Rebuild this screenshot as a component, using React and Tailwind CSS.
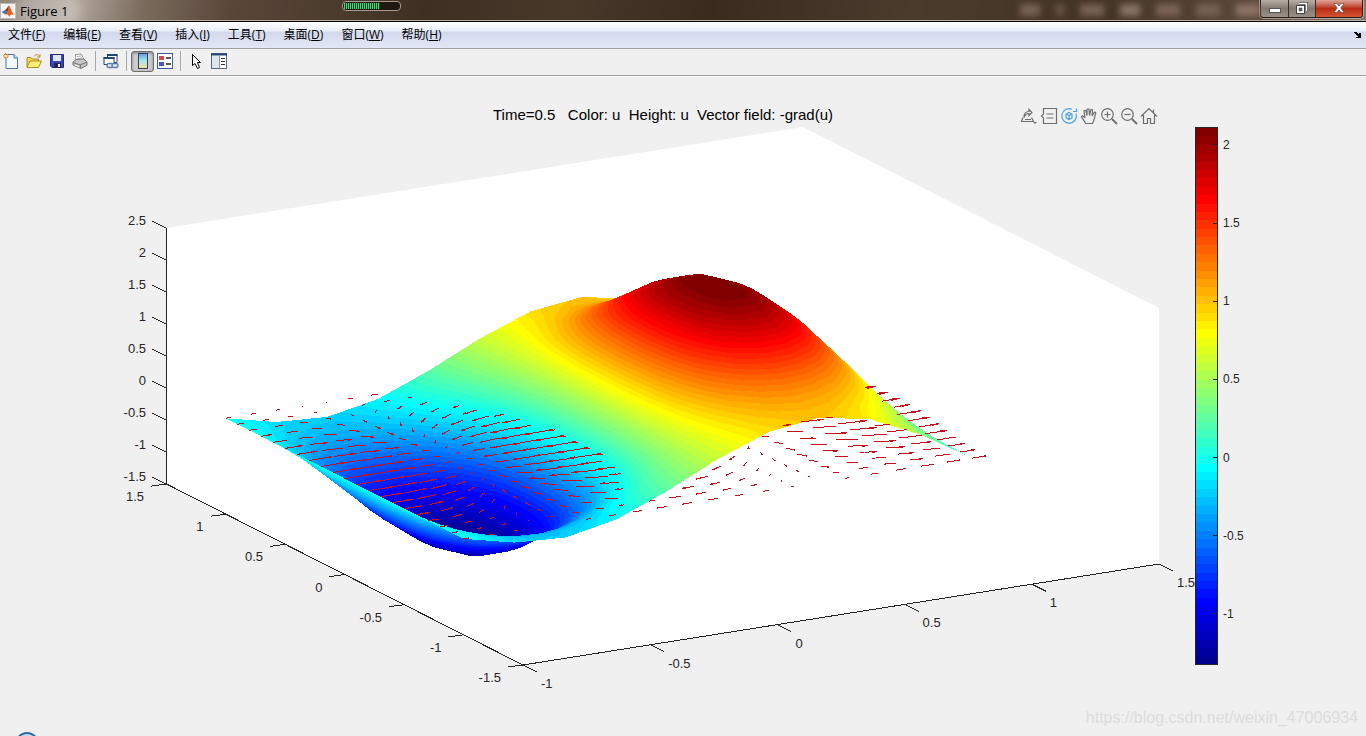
import { useMemo } from "react";
import clsx from "clsx";

const U_MIN = -1.32;
const U_MAX = 2.115;
const COLORS = 64;
const CELLS = 20;
const SUB = 2;
const ARROW_SCALE = 0.0217;

// cosine series of 3*exp(cos(pi*y)), advanced to t = 0.5
const SERIES = [1.209, 0.608, -0.042, -0.013];

const MENUS = [
  { label: "文件", key: "F" },
  { label: "编辑", key: "E" },
  { label: "查看", key: "V" },
  { label: "插入", key: "I" },
  { label: "工具", key: "T" },
  { label: "桌面", key: "D" },
  { label: "窗口", key: "W" },
  { label: "帮助", key: "H" },
];

const jet = Array.from({ length: COLORS }, (_, i) => {
  const v = (i + 1) / COLORS;
  const channel = (center) =>
    Math.round(255 * Math.max(0, Math.min(1, 1.5 - Math.abs(4 * v - center))));
  return `rgb(${channel(3)},${channel(2)},${channel(1)})`;
});

function waveAt(x, y) {
  const even =
    (Math.atan(Math.cos((Math.PI / 2) * (x + 0.5))) +
      Math.atan(Math.cos((Math.PI / 2) * (x - 0.5)))) /
    2;
  const g = SERIES.reduce((sum, c, k) => sum + c * Math.cos(k * Math.PI * y), 0);
  return even + Math.sin(Math.PI * x) * g;
}

function project(x, y, z) {
  return {
    x: 523 + 254.4 * (x + 1) - 119 * (y + 1.5),
    y: 665 - 40.4 * (x + 1) - 60.3 * (y + 1.5) - 64 * (z + 1.5),
  };
}

// The border has one edge per two cells, inner nodes are averaged
// with their neighbours.
function nodeHeight(i, j) {
  const h = 2 / CELLS;
  const x = i * h - 1;
  const y = j * h - 1;
  if (j === 0 || j === CELLS) {
    if (i % 2 === 0) return waveAt(x, y);
    return (waveAt(x - h, y) + waveAt(x + h, y)) / 2;
  }
  if (i === 0 || i === CELLS) return 0;
  const around =
    (waveAt(x - h, y) + waveAt(x + h, y) + waveAt(x, y - h) + waveAt(x, y + h)) / 4;
  return (waveAt(x, y) + around) / 2;
}

function meshHeight(fi, fj) {
  const i = Math.min(CELLS - 1, Math.floor(fi));
  const j = Math.min(CELLS - 1, Math.floor(fj));
  const s = fi - i;
  const t = fj - j;
  return (
    nodeHeight(i, j) * (1 - s) * (1 - t) +
    nodeHeight(i + 1, j) * s * (1 - t) +
    nodeHeight(i, j + 1) * (1 - s) * t +
    nodeHeight(i + 1, j + 1) * s * t
  );
}

function clip(points, level, sign) {
  const out = [];
  points.forEach((a, i) => {
    const b = points[(i + 1) % points.length];
    const da = sign * (a.u - level);
    const db = sign * (b.u - level);
    if (da >= 0) out.push(a);
    if (da * db < 0) {
      const t = da / (da - db);
      out.push({
        x: a.x + t * (b.x - a.x),
        y: a.y + t * (b.y - a.y),
        u: level,
      });
    }
  });
  return out;
}

function buildSurface() {
  const n = CELLS * SUB;
  const step = (U_MAX - U_MIN) / COLORS;
  const nodes = [];
  for (let j = 0; j <= n; j++) {
    nodes.push([]);
    for (let i = 0; i <= n; i++) {
      const u = meshHeight(i / SUB, j / SUB);
      nodes[j].push({ ...project((2 * i) / n - 1, (2 * j) / n - 1, u), u });
    }
  }
  const band = (u) =>
    Math.max(0, Math.min(COLORS - 1, Math.floor((u - U_MIN) / step)));
  const polygons = [];
  // far cells first
  for (let j = n - 1; j >= 0; j--) {
    for (let i = n - 1; i >= 0; i--) {
      const a = nodes[j][i];
      const b = nodes[j][i + 1];
      const c = nodes[j + 1][i + 1];
      const d = nodes[j + 1][i];
      [
        [b, c, d],
        [a, b, d],
      ].forEach((tri) => {
        const values = tri.map((p) => p.u);
        const first = band(Math.min(...values));
        const last = band(Math.max(...values));
        for (let k = first; k <= last; k++) {
          let shape = tri;
          if (k > first) shape = clip(shape, U_MIN + k * step, 1);
          if (k < last) shape = clip(shape, U_MIN + (k + 1) * step, -1);
          if (shape.length > 2) {
            polygons.push({
              fill: jet[k],
              points: shape
                .map((p) => `${p.x.toFixed(1)},${p.y.toFixed(1)}`)
                .join(" "),
            });
          }
        }
      });
    }
  }
  return polygons;
}

// walks from a point of the z = 0 plane towards the camera and
// reports whether the line of sight crosses the surface
function isHidden(x, y) {
  let above = Math.abs(x) > 0.99 ? true : null;
  for (let s = 0; s < 2.2; s += 0.02) {
    const px = x - 0.378 * s;
    const py = y - 0.808 * s;
    if (Math.abs(px) > 1 || Math.abs(py) > 1) continue;
    const isAbove = s >= waveAt(px, py) - 0.01;
    if (above === null) above = isAbove;
    if (above !== isAbove) return true;
  }
  return false;
}

function buildArrows() {
  const h = 0.001;
  let path = "";
  const line = (x0, y0, x1, y1) => {
    const a = project(x0, y0, 0);
    const b = project(x1, y1, 0);
    path += `M${a.x.toFixed(1)} ${a.y.toFixed(1)}L${b.x.toFixed(1)} ${b.y.toFixed(1)}`;
  };
  for (let j = 0; j <= 20; j++) {
    for (let i = 0; i <= 20; i++) {
      const x = i / 10 - 1;
      const y = j / 10 - 1;
      const dx = (-(waveAt(x + h, y) - waveAt(x - h, y)) / (2 * h)) * ARROW_SCALE;
      const dy = (-(waveAt(x, y + h) - waveAt(x, y - h)) / (2 * h)) * ARROW_SCALE;
      for (let k = 0; k < 4; k++) {
        const mid = (k + 0.5) / 4;
        if (isHidden(x + mid * dx, y + mid * dy)) continue;
        line(
          x + (k / 4) * dx,
          y + (k / 4) * dy,
          x + ((k + 1) / 4) * dx,
          y + ((k + 1) / 4) * dy
        );
      }
      if (!isHidden(x + dx, y + dy)) {
        [0.07, -0.07].forEach((w) => {
          line(x + dx, y + dy, x + 0.72 * dx - w * dy, y + 0.72 * dy + w * dx);
        });
      }
    }
  }
  return path;
}

function Surface() {
  const polygons = useMemo(buildSurface, []);
  const arrows = useMemo(buildArrows, []);
  return (
    <>
      <g shapeRendering="crispEdges">
        {polygons.map((p, i) => (
          <polygon key={i} points={p.points} fill={p.fill} />
        ))}
      </g>
      <path
        d={arrows}
        fill="none"
        stroke="#c80f1e"
        strokeWidth="1"
        shapeRendering="crispEdges"
      />
    </>
  );
}

function Axes() {
  const zTicks = [2.5, 2, 1.5, 1, 0.5, 0, -0.5, -1, -1.5];
  const yTicks = [1.5, 1, 0.5, 0, -0.5, -1, -1.5];
  const xTicks = [-1, -0.5, 0, 0.5, 1, 1.5];
  return (
    <g fontSize="13" fill="#262626">
      <g stroke="#262626" shapeRendering="crispEdges">
        <path d="M166.500 228V484L523 665L1159 564" fill="none" />
        {zTicks.map((z) => {
          const p = project(-1, 1.5, z);
          return <line key={z} x1={p.x} y1={p.y} x2={p.x - 14} y2={p.y - 7} />;
        })}
        {yTicks.map((y) => {
          const p = project(-1, y, -1.5);
          return <line key={y} x1={p.x} y1={p.y} x2={p.x - 15} y2={p.y + 2} />;
        })}
        {xTicks.map((x) => {
          const p = project(x, -1.5, -1.5);
          return <line key={x} x1={p.x} y1={p.y} x2={p.x + 14} y2={p.y + 7} />;
        })}
      </g>
      {zTicks.map((z) => {
        const p = project(-1, 1.5, z);
        return (
          <text key={z} x={p.x - 20} y={p.y - 3} textAnchor="end">
            {z}
          </text>
        );
      })}
      {yTicks.map((y) => {
        const p = project(-1, y, -1.5);
        return (
          <text key={y} x={p.x - 22} y={p.y + 17} textAnchor="end">
            {y}
          </text>
        );
      })}
      {xTicks.map((x) => {
        const p = project(x, -1.5, -1.5);
        return (
          <text key={x} x={p.x + 18} y={p.y + 23}>
            {x}
          </text>
        );
      })}
    </g>
  );
}

function Colorbar() {
  const top = 127;
  const height = 537;
  const ticks = [2, 1.5, 1, 0.5, 0, -0.5, -1];
  return (
    <g>
      <g shapeRendering="crispEdges">
        {jet.map((color, i) => (
          <rect
            key={color}
            x="1195"
            y={top + height * (1 - (i + 1) / COLORS)}
            width="23"
            height={height / COLORS + 1}
            fill={color}
          />
        ))}
        <rect x="1195.500" y="127.500" width="22" height="537" fill="none" stroke="#262626" />
      </g>
      {ticks.map((t) => {
        const y = top + (height * (U_MAX - t)) / (U_MAX - U_MIN);
        return (
          <g key={t} fontSize="12" fill="#262626">
            <line x1="1213" x2="1218" y1={y} y2={y} stroke="#262626" shapeRendering="crispEdges" />
            <text x="1223" y={y + 4}>
              {t}
            </text>
          </g>
        );
      })}
    </g>
  );
}

function Figure() {
  return (
    <svg
      viewBox="0 76 1366 660"
      className="block h-full w-full font-['Liberation_Sans',Arial,sans-serif]"
      role="img"
      aria-label="Surface plot"
    >
      <polygon points="166,228 803,127 1159,308 1159,564 523,665 166,484" fill="#fff" />
      <text x="663" y="120" textAnchor="middle" fontSize="15" fill="#000" className="whitespace-pre">
        {"Time=0.5   Color: u  Height: u  Vector field: -grad(u)"}
      </text>
      <Axes />
      <Surface />
      <Colorbar />
    </svg>
  );
}

function MatlabLogo() {
  return (
    <svg width="16" height="16" viewBox="0 0 16 16" aria-hidden="true">
      <rect x="0.500" y="0.500" width="15" height="15" fill="#f4f4f4" stroke="#b8b8b8" />
      <path d="M1.500 9 5 7 7 9 4.500 11z" fill="#3f7fb5" />
      <path d="M5 7C7 6 8 3 9 2.500L8 9 6 11.500 4.500 11 7 9z" fill="#8a2c14" />
      <path d="M9 2.500C10.500 4 12 10 14.500 12.500C12.500 11 11 11 9 14C8.500 12 7.500 11 6 11.500C8 9 8 4 9 2.500z" fill="#e0601c" />
    </svg>
  );
}

function TitleBar() {
  return (
    <header className="relative flex h-[22px] items-start justify-between overflow-hidden border-b border-black bg-[linear-gradient(100deg,#8f857b_0px,#b5aba1_70px,#7b6c5e_140px,#584639_230px,#4c3c2e_330px,#3f2f22_420px,#48382a_560px,#3b2b1f_700px,#4b3b2d_900px,#443426_1080px,#5b4a3b_1240px,#8b8178_1366px)] shadow-[inset_0_-1px_0_#b8aea4]">
      <div className="flex h-[22px] items-center gap-1">
        <MatlabLogo />
        <h1 className="rounded-full bg-white/20 pr-2 font-['Open_Sans','Noto_Sans',sans-serif] text-[13px] leading-5 text-black shadow-[0_0_10px_6px_rgba(255,255,255,0.2)]">
          Figure 1
        </h1>
      </div>
      <div className="absolute top-px left-[342px] h-[10px] w-[59px] rounded-[4px] border border-[#a39a90] bg-[#20180f] p-px">
        <div className="h-full w-9 bg-[repeating-linear-gradient(90deg,#4fce72_0px,#4fce72_1px,#1c4a26_1px,#1c4a26_2px)]" />
      </div>
      <div className="absolute top-1 left-[1020px] flex h-3 gap-4 blur-[3px]" aria-hidden="true">
        <i className="w-5 bg-[#8b7568]/70" />
        <i className="w-2 bg-[#8b7568]/50" />
        <i className="w-6 bg-[#8b7568]/70" />
        <i className="w-5 bg-[#a08a7c]/70" />
        <i className="w-6 bg-[#8b7568]/70" />
        <i className="w-6 bg-[#8b7568]/60" />
        <i className="w-6 bg-[#a08478]/70" />
      </div>
      <div className="mr-[3px] flex h-[18px] overflow-hidden rounded-b-[4px] border border-t-0 border-[#2a1c14] shadow-[0_0_0_1px_rgba(255,255,255,0.4)]">
        <button aria-label="Minimize" className="flex w-7 justify-center border-r border-[#3a2c24] bg-linear-to-b from-[#b8b0a8] via-[#84796f] via-50% to-[#9b9087] pt-2">
          <svg width="12" height="5" viewBox="0 0 12 5">
            <rect x="0.500" y="0.500" width="11" height="4" fill="#fff" stroke="#555" />
          </svg>
        </button>
        <button aria-label="Restore" className="flex w-[27px] justify-center border-r border-[#3a2c24] bg-linear-to-b from-[#b8b0a8] via-[#84796f] via-50% to-[#9b9087] pt-[2px]">
          <svg width="12" height="12" viewBox="0 0 12 12">
            <path d="M3 1.500H10.500V9" fill="none" stroke="#444" strokeWidth="3" />
            <path d="M3 1.500H10.500V9" fill="none" stroke="#fff" strokeWidth="1.500" />
            <rect x="0.500" y="3.500" width="8" height="8" fill="#fff" stroke="#444" />
            <rect x="3" y="6" width="3" height="3" fill="#6b6058" stroke="#444" strokeWidth="0.500" />
          </svg>
        </button>
        <button aria-label="Close" className="flex w-[46px] justify-center bg-linear-to-b from-[#dba397] via-[#bb2b12] via-50% to-[#d4532f] pt-[3px]">
          <svg width="12" height="10" viewBox="0 0 12 10">
            <path d="M1 0.500H4L6 3 8 0.500H11L7.800 5 11 9.500H8L6 7 4 9.500H1L4.200 5z" fill="#fff" stroke="#54504c" strokeWidth="0.700" />
          </svg>
        </button>
      </div>
    </header>
  );
}

function MenuBar() {
  return (
    <nav className="flex h-[27px] items-center justify-between border-b border-[#a0a0a0] bg-[linear-gradient(#ffffff_0px,#e9eef8_9px,#d3d9ec_10px,#e2e7f6_26px)] pr-1 pl-2">
      <div className="flex gap-[18px] font-['Open_Sans','Noto_Sans_CJK_SC',sans-serif] text-xs leading-5 text-black">
        {MENUS.map((menu) => (
          <button key={menu.key} className="whitespace-nowrap">
            {menu.label}(<span className="underline">{menu.key}</span>)
          </button>
        ))}
      </div>
      <button aria-label="Dock">
        <svg width="8" height="7" viewBox="0 0 8 7" shapeRendering="crispEdges">
          <path d="M0 0H2L5 3V1H7V6H2V5H4L0 1z" fill="#000" />
        </svg>
      </button>
    </nav>
  );
}

function Separator() {
  return <div className="mx-[7px] h-5 w-px bg-[#a8a8a8]" />;
}

function ToolButton({ label, pressed, children }) {
  return (
    <button
      aria-label={label}
      className={clsx(
        "flex items-center justify-center",
        pressed
          ? "h-[21px] w-[23px] rounded-[3px] border border-[#6e6e6e] bg-[#cdcdcd] shadow-[inset_0_1px_3px_rgba(0,0,0,0.4)]"
          : "h-5 w-4"
      )}
    >
      <svg width="16" height="16" viewBox="0 0 16 16" fill="none">
        {children}
      </svg>
    </button>
  );
}

function ToolBar() {
  return (
    <div className="relative flex h-[27px] items-center border-b border-[#a0a0a0] bg-[#f0f0f0] pb-[2px] pl-[3px] shadow-[0_1px_0_#fff]">
      <div className="flex gap-[7px]">
        <ToolButton label="New figure">
          <path d="M3 1.500H11L14.500 5V15.500H3z" fill="#f3f9ff" stroke="#4a78a8" />
          <path d="M11 1.500V5H14.500" fill="#c5dcf2" stroke="#4a78a8" />
          <path d="M2.500 0V6M0 3H6M1 1 5 5M5 1 1 5" stroke="#e0803a" />
          <circle cx="2.800" cy="3" r="1.200" fill="#fff0a0" />
        </ToolButton>
        <ToolButton label="Open file">
          <path d="M1 14V4.500H5L6.500 6H12.500V8" fill="#f5d75c" stroke="#b58b1c" />
          <path d="M1 14.500 4 8H15.500L12.500 14.500z" fill="#fff07c" stroke="#b58b1c" />
          <path d="M8 3.500C9.500 1 12 1 13.500 3.500M14 1V4H11" stroke="#b48a28" />
        </ToolButton>
        <ToolButton label="Save figure">
          <path d="M1.500 1.500H14.500V14.500H3L1.500 13z" fill="#3b46b4" stroke="#23297c" />
          <rect x="4" y="2" width="8" height="6" fill="#dfe9fa" />
          <rect x="5" y="10" width="7" height="5" fill="#20255c" />
          <rect x="9" y="11" width="2" height="3" fill="#fff" />
        </ToolButton>
        <ToolButton label="Print figure">
          <path d="M4 8 3.500 1.500 9 1 12.500 7" fill="#fff" stroke="#999" />
          <path d="M5 3.500 9 3M5.500 5.500 10 5" stroke="#aaa" />
          <path d="M1 9 4 6.500 12 6 15 9V12L9 15.500 1 12z" fill="#c4c4c4" stroke="#777" />
          <path d="M1 9.500 8 12 15 9M8.500 12V15" stroke="#777" />
          <path d="M3 12 7 13.500" stroke="#fff" />
        </ToolButton>
      </div>
      <Separator />
      <ToolButton label="Link plot">
        <path d="M4.500 1.500H14V9.500H4.500z" fill="#fff" stroke="#24456e" />
        <path d="M4 2H14.500" stroke="#24456e" strokeWidth="2" />
        <path d="M1 4.500H11V11.500H1z" fill="#fff" stroke="#24456e" />
        <path d="M0.500 5H11.500" stroke="#24456e" strokeWidth="2" />
        <rect x="4" y="10.500" width="6" height="4" rx="2" fill="#e3eaf5" stroke="#5b7aa5" strokeWidth="1.300" />
        <rect x="9" y="10.500" width="6" height="4" rx="2" fill="#e3eaf5" stroke="#5b7aa5" strokeWidth="1.300" />
      </ToolButton>
      <Separator />
      <div className="-ml-[3px] flex items-center gap-[3px]">
        <ToolButton label="Insert colorbar" pressed>
          <defs>
            <linearGradient id="cbar" x1="0" y1="0" x2="0" y2="1">
              <stop offset="0" stopColor="#5f9ee8" />
              <stop offset="0.500" stopColor="#a8eae8" />
              <stop offset="1" stopColor="#fbe08c" />
            </linearGradient>
          </defs>
          <rect x="3.500" y="0.500" width="9" height="15" fill="url(#cbar)" stroke="#2f3f66" />
        </ToolButton>
        <ToolButton label="Insert legend">
          <rect x="0.500" y="0.500" width="15" height="15" fill="#fff" stroke="#3a5f94" />
          <rect x="2" y="3" width="5" height="4" fill="#d84848" />
          <rect x="2" y="9" width="5" height="4" fill="#5050c8" />
          <path d="M9 5H14M9 11H14" stroke="#222" strokeWidth="1.500" />
        </ToolButton>
      </div>
      <Separator />
      <div className="flex gap-[7px]">
        <ToolButton label="Edit plot">
          <path d="M4.500 1.500V12.500L7 10.500 9.500 15.500 11.500 14.500 9.500 9.500H12.500z" fill="#fff" stroke="#000" />
        </ToolButton>
        <ToolButton label="Open property inspector">
          <rect x="0.500" y="0.500" width="15" height="15" fill="#fff" stroke="#56687c" />
          <path d="M0 1.500H16" stroke="#24456e" strokeWidth="2" />
          <rect x="1" y="3" width="7" height="12" fill="#dfe6ea" />
          <path d="M8.500 3V15" stroke="#8494a4" />
          <path d="M10 5.500H14M10 8.500H14M10 11.500H14" stroke="#333" />
        </ToolButton>
      </div>
    </div>
  );
}

function AxesButton({ label, active, children }) {
  return (
    <button aria-label={label} className={active ? "text-[#4aa3df]" : "text-[#6e6e6e]"}>
      <svg
        width="18"
        height="18"
        viewBox="0 0 18 18"
        fill="none"
        stroke="currentColor"
        strokeWidth="1.200"
      >
        {children}
      </svg>
    </button>
  );
}

function AxesToolbar() {
  return (
    <div className="absolute top-[31px] right-[15.200%] flex gap-[2px]">
      <AxesButton label="Export">
        <path d="M4 10.500C4 6.500 6 4.500 9 4.500V2.500L12 5.500 9 8.500V6.500C7 6.500 5 8 4 10.500z" />
        <path d="M3 10.500 1.500 14.500H13.500L11.500 10.500M5 12.500H11" />
        <path d="M13 15H17L15 17z" fill="currentColor" stroke="none" />
      </AxesButton>
      <AxesButton label="Data tips">
        <path d="M3.500 1.500H16.500V16.500H3.500V11L1.500 9 3.500 7z" />
        <path d="M6.500 7H13.500M6.500 11H13.500" />
      </AxesButton>
      <AxesButton label="Rotate 3D" active>
        <path d="M12 2.200A7.300 7.300 0 1 0 16 6.500" />
        <path d="M16.500 1.500V4.500H13" />
        <path d="M9 5.500 12 7V11L9 12.500 6 11V7zM6 7 9 8.500 12 7M9 8.500V12.500" />
      </AxesButton>
      <AxesButton label="Pan">
        <path d="M5.500 16.500C5 14 2 11.500 1.500 9.500C2.500 8.200 4 9.500 5 11L4 4C4.500 3 5.600 3 6 4L7 8.500 7 2.500C7.500 1.500 8.700 1.500 9 2.500L9.500 8.500 10.700 3C11.400 2 12.500 2.500 12.500 3.500L12 9 14.200 5.500C15 4.700 16 5.500 15.700 6.500C14.500 9.500 14.500 13 12.500 16.500z" />
      </AxesButton>
      <AxesButton label="Zoom in">
        <circle cx="7.500" cy="7.500" r="5.800" />
        <path d="M4.500 7.500H10.500M7.500 4.500V10.500" />
        <path d="M12 12 17 17" strokeWidth="1.800" />
      </AxesButton>
      <AxesButton label="Zoom out">
        <circle cx="7.500" cy="7.500" r="5.800" />
        <path d="M4.500 7.500H10.500" />
        <path d="M12 12 17 17" strokeWidth="1.800" />
      </AxesButton>
      <AxesButton label="Restore view">
        <path d="M1 9.500 9 1.500 17 9.500M3.500 8V16.500H7.500V11.500H10.500V16.500H14.500V8M13.500 5.500V2.500" />
      </AxesButton>
    </div>
  );
}

export default function App() {
  return (
    <div className="flex h-screen flex-col overflow-hidden bg-[#f0f0f0]">
      <TitleBar />
      <MenuBar />
      <ToolBar />
      <main className="relative min-h-0 flex-1">
        <Figure />
        <AxesToolbar />
        <p className="absolute right-2 bottom-2 font-['Liberation_Sans',Arial,sans-serif] text-base leading-5 text-[#dcdcdc]">
          https://blog.csdn.net/weixin_47006934
        </p>
        <div className="absolute -bottom-5 left-[15px] size-6 rounded-full border-2 border-[#2f6a9c] bg-[#c4ddf0]" />
      </main>
    </div>
  );
}
